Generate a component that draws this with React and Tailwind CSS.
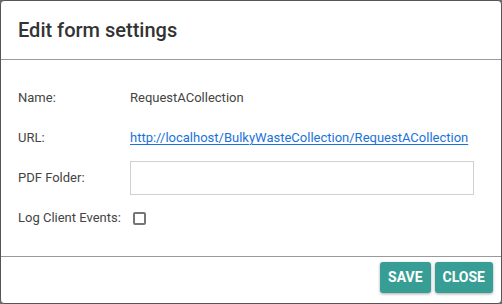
const rows = [
    { label: "Name:", kind: "text", value: "RequestACollection" },
    { label: "URL:", kind: "link", value: "http://localhost/BulkyWasteCollection/RequestACollection" },
    { label: "PDF Folder:", kind: "input" },
    { label: "Log Client Events:", kind: "checkbox" },
];

const FieldValue = ({ kind, value }) => {
    if (kind === "link") {
        return (
            <a href="#" className="text-[#1a73d9] underline underline-offset-2">
                {value}
            </a>
        );
    }
    if (kind === "input") {
        return <input type="text" className="w-[344px] h-[34px] border border-[#d0d0d0] bg-white outline-none px-2" />;
    }
    if (kind === "checkbox") {
        return <span className="ml-[3px] block w-[13px] h-[13px] border-2 border-[#767676] rounded-[2px]"></span>;
    }
    return <span>{value}</span>;
};

const App = () => {
    return (
        <div className="w-[502px] h-[304px] bg-[#6b6b6b]" style={{ fontFamily: "Roboto, 'Liberation Sans', sans-serif" }}>
            <div className="w-full h-full flex flex-col bg-white border border-[#555] rounded-[4px] overflow-hidden">
                <div className="h-[59px] shrink-0 flex items-center px-[17px] border-b border-[#9a9a9a]">
                    <h1 className="text-[20px] font-medium text-[#333]">Edit form settings</h1>
                </div>

                <div className="flex-1 pt-[18px] px-[17px] text-[13px] text-[#444]">
                    {rows.map((row) => (
                        <div key={row.label} className="h-[40px] flex items-center">
                            <div className="w-[112px] shrink-0">{row.label}</div>
                            <FieldValue kind={row.kind} value={row.value} />
                        </div>
                    ))}
                </div>

                <div className="h-[47px] shrink-0 border-t border-[#9a9a9a] flex justify-end items-start pt-[5px] pr-[8px] gap-[4px]">
                    <button className="h-[31px] px-2 rounded-[3px] bg-[#379e96] text-white text-[14px] font-bold shadow-[0_1px_3px_rgba(0,0,0,0.35)]">
                        SAVE
                    </button>
                    <button className="h-[31px] px-2 rounded-[3px] bg-[#379e96] text-white text-[14px] font-bold shadow-[0_1px_3px_rgba(0,0,0,0.35)]">
                        CLOSE
                    </button>
                </div>
            </div>
        </div>
    );
};

export default App;
